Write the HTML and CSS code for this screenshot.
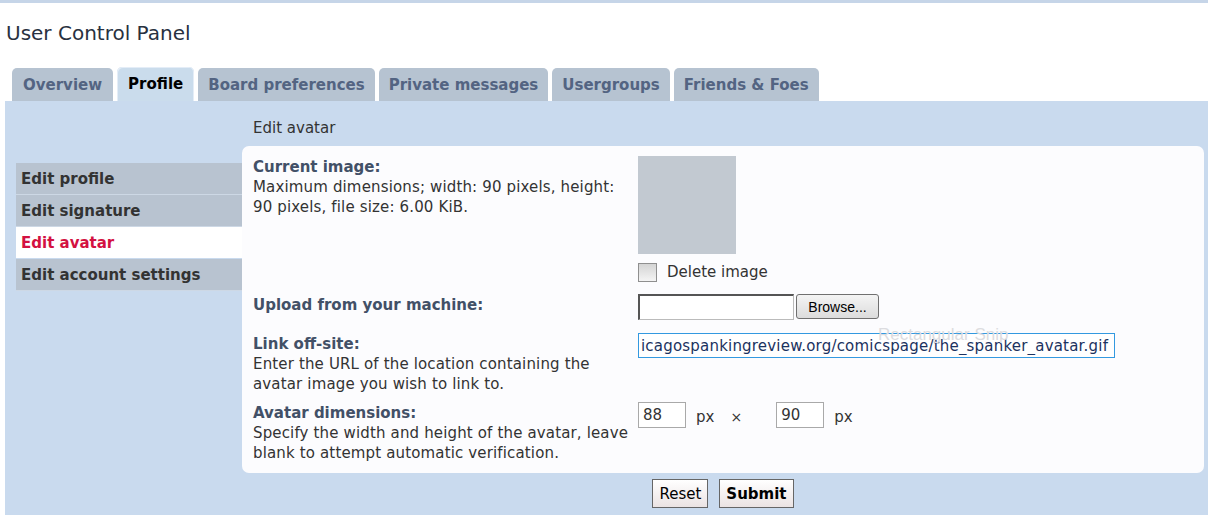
FILE: index.html
```html
<!DOCTYPE HTML>
<html>
<head>
  <meta charset="utf-8">
  <link rel="stylesheet" href="styles.css">
</head>
<body>
  <div class="topbar"></div>
  <h2 class="title">User Control Panel</h2>
  <ul class="tabs">
    <li class="tab"><a href="#">Overview</a></li>
    <li class="tab active"><a href="#">Profile</a></li>
    <li class="tab"><a href="#">Board preferences</a></li>
    <li class="tab"><a href="#">Private messages</a></li>
    <li class="tab"><a href="#">Usergroups</a></li>
    <li class="tab"><a href="#">Friends &amp; Foes</a></li>
  </ul>
  <div class="panel">
    <ul class="menu">
      <li><a href="#">Edit profile</a></li>
      <li><a href="#">Edit signature</a></li>
      <li class="active"><a href="#">Edit avatar</a></li>
      <li><a href="#">Edit account settings</a></li>
    </ul>
    <div class="main">
      <h3 class="heading">Edit avatar</h3>
      <form class="box">
        <dl class="row">
          <dt><label>Current image:</label><span class="explain">Maximum dimensions; width: 90 pixels, height: 90 pixels, file size: 6.00 KiB.</span></dt>
          <dd>
            <div class="avatar"></div>
            <label class="delete"><input type="checkbox" class="check"> Delete image</label>
          </dd>
        </dl>
        <dl class="row row-upload">
          <dt><label>Upload from your machine:</label></dt>
          <dd class="inline">
            <input type="text" class="file-box">
            <button type="button" class="browse">Browse...</button>
          </dd>
        </dl>
        <dl class="row row-link">
          <dt><label>Link off-site:</label><span class="explain">Enter the URL of the location containing the avatar image you wish to link to.</span></dt>
          <dd><input type="text" class="url" value="icagospankingreview.org/comicspage/the_spanker_avatar.gif"></dd>
        </dl>
        <dl class="row row-dims">
          <dt><label>Avatar dimensions:</label><span class="explain">Specify the width and height of the avatar, leave blank to attempt automatic verification.</span></dt>
          <dd class="inline">
            <input type="text" class="dim" value="88"><span class="unit">px</span><span class="times">&times;</span><input type="text" class="dim" value="90"><span class="unit">px</span>
          </dd>
        </dl>
        <span class="snip">Rectangular Snip</span>
      </form>
      <div class="actions">
        <button type="reset" class="btn">Reset</button>
        <button type="submit" class="btn submit">Submit</button>
      </div>
    </div>
  </div>
</body>
</html>
```

FILE: styles.css
```css
body {margin: 0; font-family: "DejaVu Sans", Verdana, sans-serif; font-size: 14px; color: #333; background: #fff;}
.topbar {height: 3px; background: #c6d5e8;}
.title {margin: 0; padding: 17px 6px 0; font-size: 20px; font-weight: normal; line-height: 26px; color: #28313f;}

.tabs {list-style: none; margin: 21px 0 0; padding: 0 0 0 12px; display: flex; gap: 4px; align-items: flex-end;}
.tab a {display: block; padding: 1px 11px 0; line-height: 32px; background: #b6c3d1; color: #536482; font-weight: bold; font-size: 15px; text-decoration: none; border-radius: 5px 5px 0 0;}
.tab.active a {background: #cadcec; color: #000; line-height: 33px; box-shadow: inset 1px 1px 0 #e4edf7, inset -1px 0 0 #e4edf7;}
.tab:nth-child(n+3) a {padding: 1px 10px 0;}

.panel {margin-left: 5px; background: #c9daee; display: flex; padding: 0 4px 20px 11px;}

.menu {list-style: none; margin: 62px 0 0; padding: 0; width: 226px; flex: none;}
.menu li a {display: block; height: 29px; padding: 2px 0 0 5px; line-height: 29px; background: #b8c3d0; border-bottom: 1px solid #cdd8e5; font-weight: bold; font-size: 15px; color: #333; text-decoration: none;}
.menu li.active a {background: #fff; color: #d31141; border-bottom-color: #c9daee;}

.main {flex: 1;}
.heading {margin: 0; padding: 17px 0 8px 11px; font-size: 15px; font-weight: normal; line-height: 20px; color: #333;}

.box {position: relative; background: #fcfcfe; border-radius: 7px; padding: 10px 11px;}
.snip {position: absolute; left: 636px; top: 180px; z-index: 1; line-height: 18px; color: #dcdce0; font-size: 17px; font-family: "Liberation Sans", Arial, sans-serif; pointer-events: none;}

.row {display: flex; margin: 0; line-height: 20px;}
.row dt {width: 385px; flex: none; padding-top: 1px;}
.row dt label {display: block; font-weight: bold; font-size: 15px; color: #425067;}
.row dt .explain {display: block; font-size: 15px; letter-spacing: 0.15px; color: #333;}
.row dd {margin: 0; flex: 1;}
.row dd.inline {display: flex; align-items: flex-start;}
.row-upload {margin-top: 12px;}
.row-link {margin-top: 13px;}
.row-dims {margin-top: 8px;}

.avatar {width: 98px; height: 98px; background: #c2c9d1;}
.delete {display: flex; align-items: center; margin-top: 8px; font-size: 15px; color: #333;}
.check {appearance: none; -webkit-appearance: none; margin: 0 10px 0 0; width: 19px; height: 19px; border: 1px solid #8f8f8f; background: linear-gradient(#d4d4d4, #f4f4f4); box-sizing: border-box;}

.file-box {box-sizing: border-box; width: 156px; height: 26px; margin: 0; border: 1px solid #bbb; border-top: 2px solid #555; border-left: 2px solid #555; background: #fff;}
.browse {box-sizing: border-box; margin-left: 2px; width: 83px; height: 25px; border: 1px solid #707070; border-radius: 3px; background: linear-gradient(#f4f4f4, #dcdcdc); font-family: "Liberation Sans", Arial, sans-serif; font-size: 14px; color: #000; padding: 0;}

.url {box-sizing: border-box; width: 477px; height: 25px; margin: 0; padding: 0 2px; border: 1px solid #3399e0; font-family: "DejaVu Sans", Verdana, sans-serif; font-size: 15px; letter-spacing: 0.2px; color: #1b3260; outline: none; background: #fff;}

.dim {box-sizing: border-box; width: 48px; height: 26px; margin: 0; padding: 0 4px; border: 1px solid #a9a9a9; font-family: "DejaVu Sans", Verdana, sans-serif; font-size: 15px; color: #333; background: #fff;}
.unit {margin: 5px 0 0 10px; font-size: 15px; color: #333;}
.times {margin: 5px 34px 0 16px; font-size: 14px; color: #333;}

.actions {display: flex; justify-content: center; gap: 11px; margin-top: 6px;}
.btn {box-sizing: border-box; height: 29px; padding: 0 6px; border: 1px solid #666; background: linear-gradient(#fff, #ebe3e3); font-family: "DejaVu Sans", Verdana, sans-serif; font-size: 15px; color: #000;}
.btn.submit {font-weight: bold;}
```
